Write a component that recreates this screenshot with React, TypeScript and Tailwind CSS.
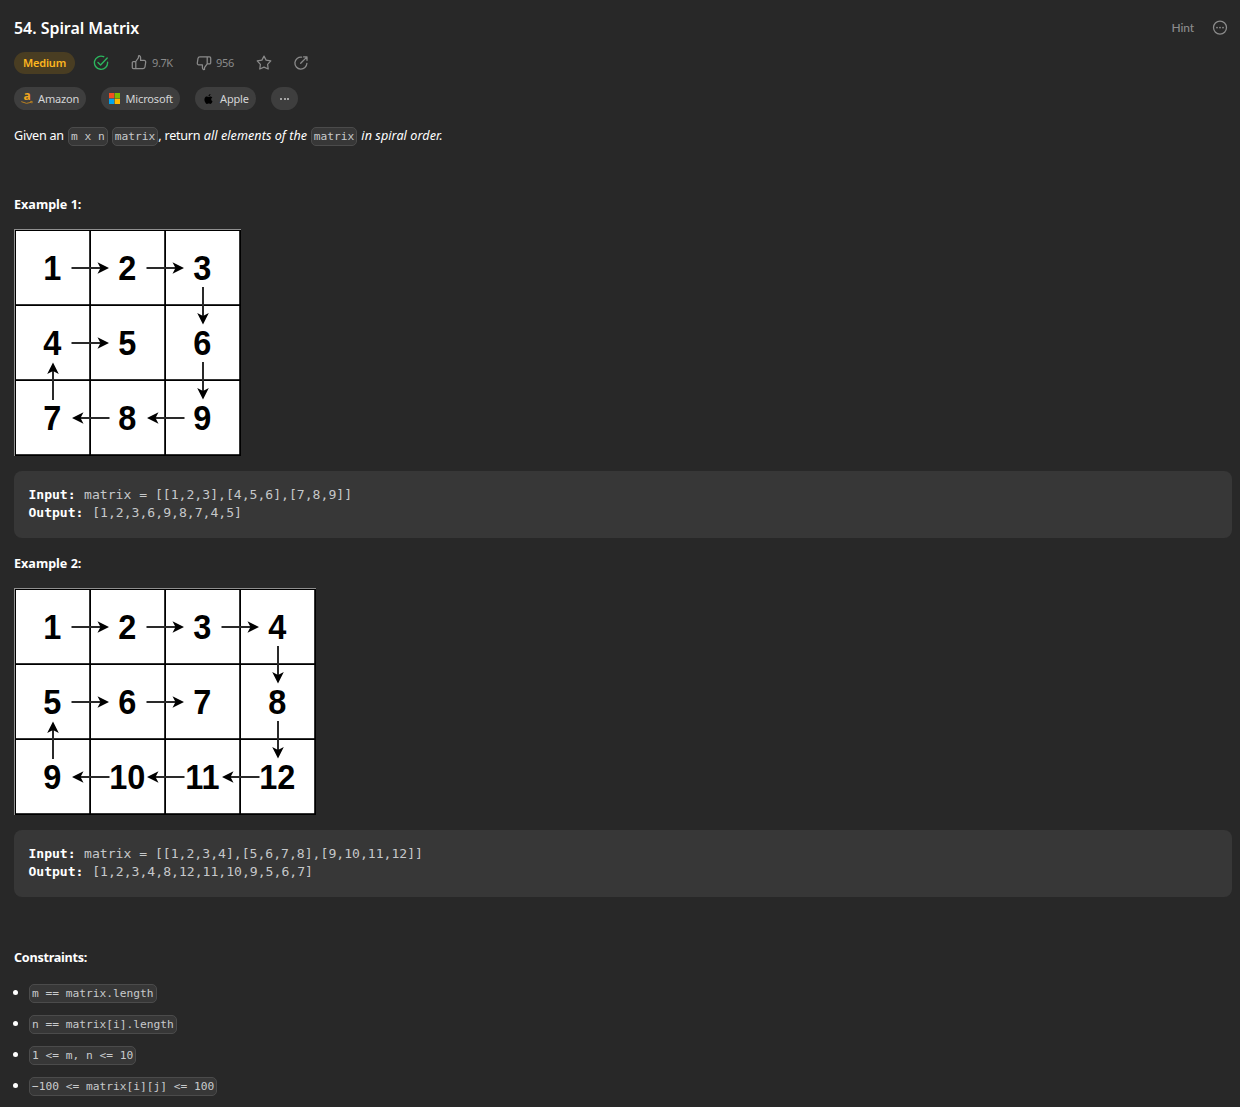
import React from "react";

const UI = "font-['Noto_Sans','Open_Sans',sans-serif]";

type Cell = [number, number];

/* Arrow that leaves a cell towards a neighbouring one; it is centred on 0,0 and the head points right. */
function Arrow({ x, y, turn }: { x: number; y: number; turn: number }) {
  return (
    <g transform={`translate(${x} ${y}) rotate(${turn})`}>
      <path d="M-18.5 0H14" stroke="#2a2a2a" strokeWidth="2" />
      <path d="M19 0L7.5 -5.8L10.5 0L7.5 5.8Z" fill="#000" />
    </g>
  );
}

function Matrix({ rows, path }: { rows: number[][]; path: Cell[] }) {
  const cols = rows[0].length;
  const w = cols * 75 + 2;
  const h = rows.length * 75 + 2;
  return (
    <svg width={w} height={h} viewBox={`0 0 ${w} ${h}`} className="block">
      <rect width={w} height={h} fill="#000" />
      <path d={`M0 .5H${w}M.5 0V${h}`} stroke="#8f8f8f" strokeWidth="1" />
      {rows.map((row, r) =>
        row.map((n, c) => (
          <rect key={`${r}-${c}`} x={c * 75 + 2} y={r * 75 + 2} width={73.2} height={73.2} fill="#fff" />
        )),
      )}
      {path.slice(1).map(([r, c], i) => {
        const [pr, pc] = path[i];
        const turn = c > pc ? 0 : c < pc ? 180 : r > pr ? 90 : -90;
        return (
          <Arrow
            key={i}
            x={((c + pc) / 2) * 75 + (turn === 0 ? 38.5 : turn === 180 ? 39.5 : 39)}
            y={((r + pr) / 2) * 75 + (turn === -90 ? 40 : 39)}
            turn={turn}
          />
        );
      })}
      {rows.map((row, r) =>
        row.map((n, c) => (
          <text
            key={`${r}-${c}`}
            transform={`translate(${c * 75 + 38.3} ${r * 75 + 50.7}) scale(.97 1.03)`}
            textAnchor="middle"
            className="fill-black font-['Liberation_Sans',sans-serif] text-[33.5px] font-bold"
          >
            {n}
          </text>
        )),
      )}
    </svg>
  );
}

function Code({ children }: { children: React.ReactNode }) {
  return (
    <code className="inline-block h-[19px] shrink-0 rounded-[5px] border border-[#4b4b4b] bg-[#373737] px-[2px] font-['DejaVu_Sans_Mono',monospace] text-[11.23px] leading-[17px] tracking-normal whitespace-pre text-[#c8cacc]">
      {children}
    </code>
  );
}

function Pre({ input, output }: { input: string; output: string }) {
  return (
    <pre className="mt-[15px] h-[67px] rounded-lg bg-[#373737] pt-[14.5px] pl-[14.5px] font-['DejaVu_Sans_Mono',monospace] text-[13.1px] leading-[18.4px] text-[#c6c8ca]">
      <b className="inline-block w-[55.5px] tracking-[-0.05px] text-white">Input:</b>
      {input}
      {"\n"}
      <b className="inline-block w-[63.7px] tracking-[-0.05px] text-white">Output:</b>
      {output}
    </pre>
  );
}

function Chip({ icon, label, className }: { icon: React.ReactNode; label: string; className: string }) {
  return (
    <div className={`flex h-[23px] items-center rounded-full bg-[#3e3e3e] text-[11px] text-[#d4d5d7] ${className}`}>
      {icon}
      <span className="translate-y-[0.5px] tracking-[-0.15px]">{label}</span>
    </div>
  );
}

const stroke = { fill: "none", stroke: "currentColor", strokeLinecap: "round", strokeLinejoin: "round" } as const;

const ThumbUp = () => (
  <svg width="16" height="16" viewBox="0 0 16 16" strokeWidth="1.25" {...stroke}>
    <path d="M4.8 14.2H2.4A1.1 1.1 0 0 1 1.3 13.1V8.3A1.1 1.1 0 0 1 2.4 7.2H4.8V14.2H12.1A1.9 1.9 0 0 0 14 12.6L14.7 7.8A1.5 1.5 0 0 0 13.2 6.1H9.6V3.3A2 2 0 0 0 8.3 1.4L7.5 1.6V3.4L4.8 7.2" />
  </svg>
);

const Label = ({ children, className }: { children: string; className: string }) => (
  <p className={`h-5 text-[12.6px] leading-5 font-bold ${className}`}>{children}</p>
);

export default function App() {
  return (
    <div className={`h-[1107px] w-full overflow-hidden bg-[#282828] pr-2 pl-[14px] text-white ${UI}`}>
      <div className="flex items-center justify-between pt-4">
        <h1 className="h-6 text-[16px] leading-6 font-semibold tracking-[-0.05px]">54. Spiral Matrix</h1>
        <div className="flex items-center pr-[4px] text-[#8c8c8c]">
          <span className="mr-[18px] font-['Lato',sans-serif] text-[12px] font-medium tracking-[-0.1px]">Hint</span>
          <svg width="16" height="16" viewBox="0 0 16 16" {...stroke} strokeWidth="1.25">
            <circle cx="8" cy="7.6" r="6.5" />
            <g fill="currentColor" stroke="none">
              <circle cx="5" cy="7.6" r=".9" />
              <circle cx="8" cy="7.6" r=".9" />
              <circle cx="11" cy="7.6" r=".9" />
            </g>
          </svg>
        </div>
      </div>

      <div className="mt-3 flex h-[22px] items-center text-[11px] text-[#8a8a8a]">
        <span className="flex h-[22px] w-[61px] items-center justify-center rounded-full bg-[#493d22] font-semibold tracking-[-0.2px] text-[#fdb61f]">
          Medium
        </span>
        <svg className="ml-[18px] text-[#2cb55d]" width="16" height="16" viewBox="0 0 16 16" {...stroke} strokeWidth="1.4">
          <path d="M10.7 1.7A6.6 6.6 0 1 0 14.6 7.3" />
          <path d="M5 7.4L7.6 9.9L14.2 3" />
        </svg>
        <div className="ml-[22px] flex w-[42px] items-center gap-[5px]">
          <span className="-translate-y-[0.7px]">
            <ThumbUp />
          </span>
          <span className="tracking-[-0.4px]">9.7K</span>
        </div>
        <div className="ml-[22.5px] flex w-[39px] items-center gap-[4.5px]">
          <span className="-scale-y-100">
            <span className="block -scale-x-100">
              <ThumbUp />
            </span>
          </span>
          <span className="tracking-[-0.3px]">956</span>
        </div>
        <svg className="ml-[21.5px]" width="16" height="16" viewBox="0 0 16 16" {...stroke} strokeWidth="1.25">
          <path d="M8 1.1L10.1 5.1L14.8 5.9L11.6 9.4L12.2 14L8 12.1L3.8 14L4.4 9.4L1.2 5.9L5.9 5.1Z" />
        </svg>
        <svg className="ml-[20.5px]" width="16" height="16" viewBox="0 0 16 16" {...stroke} strokeWidth="1.3">
          <path d="M8.6 2.1A6 6 0 1 0 13.9 8.3M10.6 1.9H14V5.3M14 1.9L7.7 8.2" />
        </svg>
      </div>

      <div className="mt-[13px] flex h-[23px] gap-[15px]">
        <Chip
          className="w-[72px] pl-[7px]"
          label="Amazon"
          icon={
            <svg className="mr-[5px] shrink-0 overflow-visible" width="12" height="16" viewBox="0 0 12 16">
              <text x="6" y="9" textAnchor="middle" className="fill-[#f0a51e] font-['Noto_Sans',sans-serif] text-[12px] font-bold">
                a
              </text>
              <path d="M.3 10.6Q5.5 13.8 10.6 11.2M9.2 10.4L11.2 10.4L10.9 12.3" fill="none" stroke="#b98020" strokeWidth="1" />
            </svg>
          }
        />
        <Chip
          className="w-[79px] pl-[8px]"
          label="Microsoft"
          icon={
            <svg className="mr-[5.5px] shrink-0" width="11" height="11" viewBox="0 0 11 11">
              <path fill="#f25022" d="M0 0h5.3v5.3H0z" />
              <path fill="#7fba00" d="M5.7 0H11v5.3H5.7z" />
              <path fill="#00a4ef" d="M0 5.7h5.3V11H0z" />
              <path fill="#ffb900" d="M5.7 5.7H11V11H5.7z" />
            </svg>
          }
        />
        <Chip
          className="w-[61px] pl-[8px]"
          label="Apple"
          icon={
            <svg className="mr-[6px] shrink-0" width="11" height="12" viewBox="2 0 20 24">
              <path d="M18.71 19.5c-.83 1.24-1.71 2.45-3.05 2.47-1.34.03-1.77-.79-3.29-.79-1.53 0-2 .77-3.27.82-1.31.05-2.3-1.32-3.14-2.53C4.25 17 2.94 12.45 4.7 9.39c.87-1.52 2.43-2.48 4.12-2.51 1.28-.02 2.5.87 3.29.87.78 0 2.26-1.07 3.81-.91.65.03 2.47.26 3.64 1.98-.09.06-2.17 1.28-2.15 3.81.03 3.02 2.65 4.03 2.68 4.04-.03.07-.42 1.44-1.38 2.83M13 3.5c.73-.83 1.94-1.46 2.94-1.5.13 1.17-.34 2.35-1.04 3.19-.69.85-1.83 1.51-2.95 1.42-.15-1.15.41-2.35 1.05-3.11z" />
            </svg>
          }
        />
        <div className="flex w-[27px] items-center justify-center gap-[1.5px] rounded-full bg-[#3e3e3e]">
          <i className="size-[2px] rounded-full bg-[#c8c8c8]" />
          <i className="size-[2px] rounded-full bg-[#c8c8c8]" />
          <i className="size-[2px] rounded-full bg-[#c8c8c8]" />
        </div>
      </div>

      <p className="mt-[16px] flex h-5 items-center text-[12.6px] leading-5 tracking-[-0.25px] whitespace-pre">
        <span className="w-[54px] shrink-0">Given an</span>
        <Code>m x n</Code>
        <span className="w-[4px] shrink-0"> </span>
        <Code>matrix</Code>
        <span className="w-[45.5px] shrink-0">, return </span>
        <em className="w-[107px] shrink-0 tracking-[0.05px]">all elements of the</em>
        <Code>matrix</Code>
        <em className="ml-1 tracking-[0.07px]">in spiral order.</em>
      </p>

      <Label className="mt-[49px]">Example 1:</Label>
      <div className="mt-[14px]">
        <Matrix
          rows={[
            [1, 2, 3],
            [4, 5, 6],
            [7, 8, 9],
          ]}
          path={[[0, 0], [0, 1], [0, 2], [1, 2], [2, 2], [2, 1], [2, 0], [1, 0], [1, 1]]}
        />
      </div>
      <Pre input="matrix = [[1,2,3],[4,5,6],[7,8,9]]" output="[1,2,3,6,9,8,7,4,5]" />

      <Label className="mt-[16px]">Example 2:</Label>
      <div className="mt-[14px]">
        <Matrix
          rows={[
            [1, 2, 3, 4],
            [5, 6, 7, 8],
            [9, 10, 11, 12],
          ]}
          path={[[0, 0], [0, 1], [0, 2], [0, 3], [1, 3], [2, 3], [2, 2], [2, 1], [2, 0], [1, 0], [1, 1], [1, 2]]}
        />
      </div>
      <Pre input="matrix = [[1,2,3,4],[5,6,7,8],[9,10,11,12]]" output="[1,2,3,4,8,12,11,10,9,5,6,7]" />

      <Label className="mt-[51px] tracking-[-0.25px]">Constraints:</Label>
      <ul className="mt-4 flex flex-col gap-[12px]">
        {["m == matrix.length", "n == matrix[i].length", "1 <= m, n <= 10", "−100 <= matrix[i][j] <= 100"].map((t) => (
          <li key={t} className="flex h-[19px] items-center">
            <span className="mr-[11px] -mt-[3px] ml-[-1px] size-[5px] rounded-full bg-white" />
            <Code>{t}</Code>
          </li>
        ))}
      </ul>
    </div>
  );
}
